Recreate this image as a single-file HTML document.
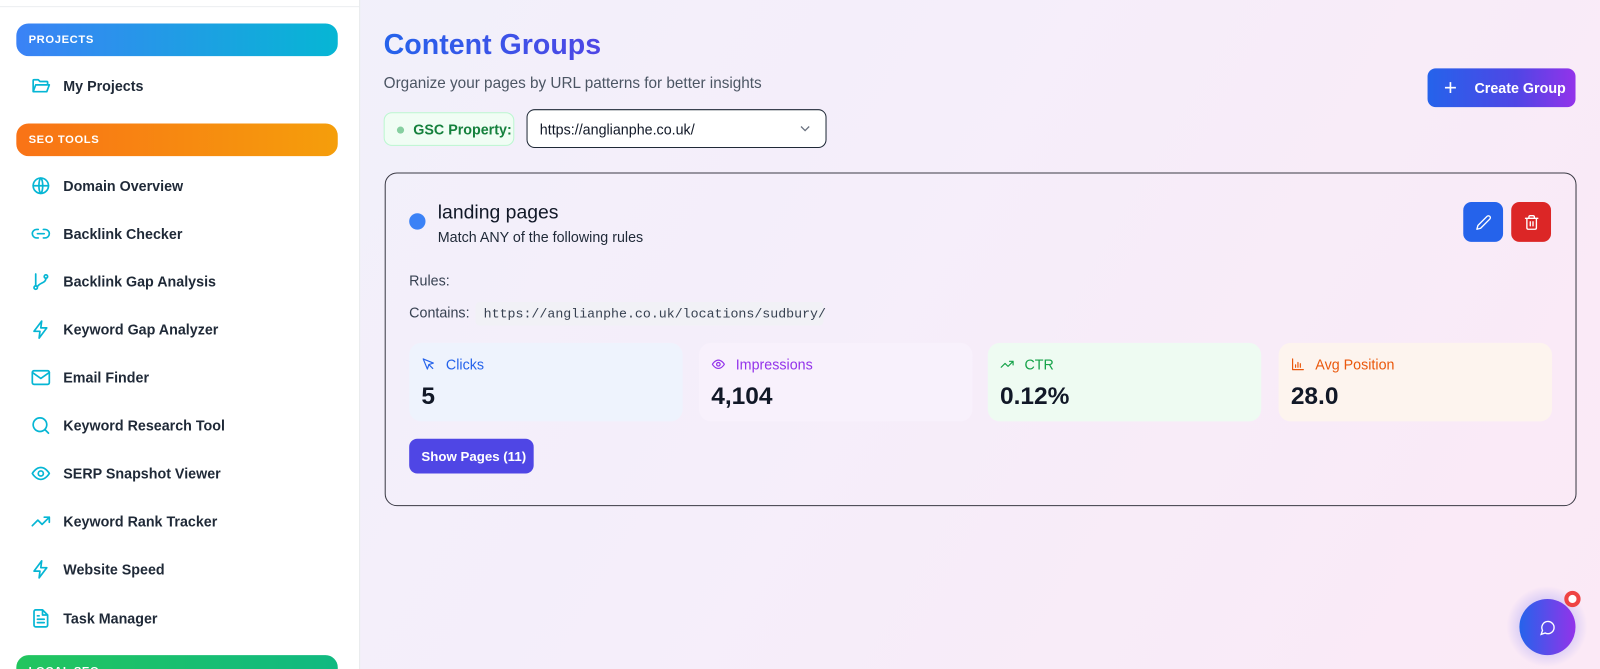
<!DOCTYPE html>
<html><head><meta charset="utf-8"><style>
*{margin:0;padding:0;box-sizing:border-box}
html,body{width:1600px;height:669px;overflow:hidden}
body{font-family:"Liberation Sans",sans-serif;background:#f5eefa}
#w{position:absolute;left:0;top:0;width:1568px;height:656px;transform:scale(1.020408);transform-origin:0 0;background:linear-gradient(120deg,#f0f1fb 0%,#f5eefa 50%,#fbe9f6 100%);overflow:hidden}
.side{position:absolute;left:0;top:0;width:353px;height:669px;background:#fff;border-right:1px solid #e5e7eb}
.side .topline{position:absolute;left:0;top:0;width:352px;height:7px;border-bottom:1px solid #eceef1}
.hdr{position:absolute;left:16px;width:315px;height:32px;border-radius:12px;color:#fff;font-weight:bold;font-size:11px;letter-spacing:.6px;padding:10px 0 0 12px}
.item{position:absolute;left:30px;height:24px;display:flex;align-items:center;font-weight:bold;font-size:14px;color:#1f2937}
.item svg{width:20px;height:20px;margin-right:12px;fill:none;stroke:#06b6d4;stroke-width:2;stroke-linecap:round;stroke-linejoin:round}
.title{position:absolute;left:376px;top:28px;font-size:28px;font-weight:bold;background:linear-gradient(90deg,#2563eb,#4f46e5);-webkit-background-clip:text;color:transparent}
.sub{position:absolute;left:376px;top:73px;font-size:15px;color:#4b5563}
.gsc{position:absolute;left:376px;top:110px;width:128px;height:33px;border:1px solid #bbf7d0;background:#f0fdf4;border-radius:8px;color:#15803d;font-weight:bold;font-size:14px;padding:8px 0 0 28px}
.gsc:before{content:"";position:absolute;left:12px;top:13px;width:7px;height:7px;border-radius:50%;background:#86cfa0}
.sel{position:absolute;left:516px;top:107px;width:294px;height:38px;border:1px solid #1f2937;border-radius:8px;background:#fff;font-size:14px;color:#111827;padding:11px 0 0 12px}
.cg{position:absolute;left:1399px;top:67px;width:145px;height:38px;border-radius:8px;background:linear-gradient(90deg,#2563eb,#4f46e5 60%,#9333ea);color:#fff;font-weight:bold;font-size:14px;padding:11px 0 0 46px}
.card{position:absolute;left:377px;top:169px;width:1168px;height:327px;border:1px solid #3a3a44;border-radius:12px}
.stat{position:absolute;top:166px;width:268px;height:77px;border-radius:12px}
.stat .l{position:absolute;left:12px;top:13px;font-size:14px;display:flex;align-items:center}
.stat .l svg{width:14px;height:14px;margin-right:10px;fill:none;stroke-width:2;stroke-linecap:round;stroke-linejoin:round;stroke:currentColor}
.stat .v{position:absolute;left:12px;top:39px;font-size:24px;font-weight:bold;color:#111827}
.btn{position:absolute;top:28px;width:39px;height:39px;border-radius:8px;display:flex;align-items:center;justify-content:center}
</style></head><body><div id="w">
<div class="side"><div class="topline"></div>
<div class="hdr" style="top:23px;background:linear-gradient(90deg,#3b82f6,#06b6d4)">PROJECTS</div>
<div class="item" style="top:72px"><svg viewBox="0 0 24 24"><path d="M3 19V6a1 1 0 0 1 1-1h5l2 2h8a1 1 0 0 1 1 1v3M3 19l3-8h16l-3 8z"/></svg>My Projects</div>
<div class="hdr" style="top:121px;background:linear-gradient(90deg,#f97316,#f59e0b)">SEO TOOLS</div>
<div class="item" style="top:170px"><svg viewBox="0 0 24 24"><circle cx="12" cy="12" r="9"/><path d="M3 12h18M12 3c3 3 3 15 0 18M12 3c-3 3-3 15 0 18"/></svg>Domain Overview</div>
<div class="item" style="top:217px"><svg viewBox="0 0 24 24"><path d="M9 17H7a5 5 0 0 1 0-10h2M15 7h2a5 5 0 0 1 0 10h-2M8 12h8"/></svg>Backlink Checker</div>
<div class="item" style="top:264px"><svg viewBox="0 0 24 24"><circle cx="6" cy="19" r="2"/><circle cx="18" cy="6" r="2"/><path d="M6 3v14M18 8c0 6-8 5-10 10"/></svg>Backlink Gap Analysis</div>
<div class="item" style="top:311px"><svg viewBox="0 0 24 24"><path d="M13 2 4 14h7l-1 8 9-12h-7z"/></svg>Keyword Gap Analyzer</div>
<div class="item" style="top:358px"><svg viewBox="0 0 24 24"><rect x="2" y="4" width="20" height="16" rx="2"/><path d="m2 6 10 7 10-7"/></svg>Email Finder</div>
<div class="item" style="top:405px"><svg viewBox="0 0 24 24"><circle cx="11" cy="11" r="8"/><path d="m21 21-4.3-4.3"/></svg>Keyword Research Tool</div>
<div class="item" style="top:452px"><svg viewBox="0 0 24 24"><path d="M2 12s4-7 10-7 10 7 10 7-4 7-10 7S2 12 2 12z"/><circle cx="12" cy="12" r="3"/></svg>SERP Snapshot Viewer</div>
<div class="item" style="top:499px"><svg viewBox="0 0 24 24"><path d="m22 7-8.5 8.5-5-5L2 17M16 7h6v6"/></svg>Keyword Rank Tracker</div>
<div class="item" style="top:546px"><svg viewBox="0 0 24 24"><path d="M13 2 4 14h7l-1 8 9-12h-7z"/></svg>Website Speed</div>
<div class="item" style="top:594px"><svg viewBox="0 0 24 24"><path d="M14 2H6a2 2 0 0 0-2 2v16a2 2 0 0 0 2 2h12a2 2 0 0 0 2-2V8zM14 2v6h6M8 13h8M8 17h8M8 9h2"/></svg>Task Manager</div>
<div class="hdr" style="top:642px;background:linear-gradient(90deg,#22c55e,#10b981)">LOCAL SEO</div>
</div>
<div class="title">Content Groups</div>
<div class="sub">Organize your pages by URL patterns for better insights</div>
<div class="gsc">GSC Property:</div>
<div class="sel">https://anglianphe.co.uk/<svg style="position:absolute;right:14px;top:13px" width="12" height="10" viewBox="0 0 12 10"><path d="M2 3l4 4 4-4" fill="none" stroke="#6b7280" stroke-width="1.3"/></svg></div>
<div class="cg"><span style="position:absolute;left:16px;top:6px;font-size:22px;font-weight:normal">+</span>Create Group</div>
<div class="card">
<div style="position:absolute;left:23px;top:39px;width:16px;height:16px;border-radius:50%;background:#3b82f6"></div>
<div style="position:absolute;left:51px;top:28px;font-size:19px;color:#111827">landing pages</div>
<div style="position:absolute;left:51px;top:54px;font-size:14px;color:#1f2937">Match ANY of the following rules</div>
<div class="btn" style="left:1056px;background:#2563eb"><svg width="16" height="16" viewBox="0 0 24 24" fill="none" stroke="#fff" stroke-width="2" stroke-linecap="round" stroke-linejoin="round"><path d="M17 3a2.8 2.8 0 1 1 4 4L7.5 20.5 2 22l1.5-5.5z"/></svg></div>
<div class="btn" style="left:1103px;background:#dc2626"><svg width="16" height="16" viewBox="0 0 24 24" fill="none" stroke="#fff" stroke-width="2" stroke-linecap="round" stroke-linejoin="round"><path d="M3 6h18M19 6v14a2 2 0 0 1-2 2H7a2 2 0 0 1-2-2V6M8 6V4a2 2 0 0 1 2-2h4a2 2 0 0 1 2 2v2M10 11v6M14 11v6"/></svg></div>
<div style="position:absolute;left:23px;top:97px;font-size:14px;color:#374151">Rules:</div>
<div style="position:absolute;left:23px;top:128px;font-size:14px;color:#374151">Contains:</div>
<div style="position:absolute;left:88px;top:126px;width:341px;height:23px;background:#f1f1f6;border-radius:4px;font-family:'Liberation Mono',monospace;font-size:13px;color:#374151;padding:4px 0 0 8px">https://anglianphe.co.uk/locations/sudbury/</div>
<div class="stat" style="left:23px;background:#eef3fd"><div class="l" style="color:#2563eb"><svg viewBox="0 0 24 24"><path d="M3 3l7 17 2.5-7.5L20 10z"/><path d="m13 13 6 6"/></svg>Clicks</div><div class="v">5</div></div>
<div class="stat" style="left:307px;background:#f8f1fc"><div class="l" style="color:#9333ea"><svg viewBox="0 0 24 24"><path d="M2 12s4-7 10-7 10 7 10 7-4 7-10 7S2 12 2 12z"/><circle cx="12" cy="12" r="3"/></svg>Impressions</div><div class="v">4,104</div></div>
<div class="stat" style="left:590px;background:#eefbf2"><div class="l" style="color:#16a34a"><svg viewBox="0 0 24 24"><path d="m22 7-8.5 8.5-5-5L2 17M16 7h6v6"/></svg>CTR</div><div class="v">0.12%</div></div>
<div class="stat" style="left:875px;background:#fdf4ee"><div class="l" style="color:#ea580c"><svg viewBox="0 0 24 24"><path d="M3 3v18h18M8 17v-4M12 17V9M16 17v-6"/></svg>Avg Position</div><div class="v">28.0</div></div>
<div style="position:absolute;left:23px;top:260px;width:122px;height:34px;background:#4f46e5;border-radius:8px;color:#fff;font-weight:bold;font-size:13px;padding:10px 0 0 12px">Show Pages (11)</div>
</div>
<div style="position:absolute;left:1476px;top:574px;width:80px;height:80px;border-radius:50%;background:radial-gradient(circle,rgba(99,102,241,.25) 40%,rgba(99,102,241,0) 70%)"></div>
<div style="position:absolute;left:1489px;top:587px;width:55px;height:55px;border-radius:50%;background:linear-gradient(90deg,#2563eb,#9333ea);display:flex;align-items:center;justify-content:center"><svg width="16" height="16" viewBox="0 0 24 24" fill="none" stroke="#fff" stroke-width="2"><path d="M7.9 20A9 9 0 1 0 4 16.1L2 22z"/></svg></div>
<div style="position:absolute;left:1533px;top:579px;width:16px;height:16px;border-radius:50%;background:#ef4444;border:4px solid #ef4444"><div style="width:8px;height:8px;border-radius:50%;background:#fff"></div></div>
</div></body></html>
